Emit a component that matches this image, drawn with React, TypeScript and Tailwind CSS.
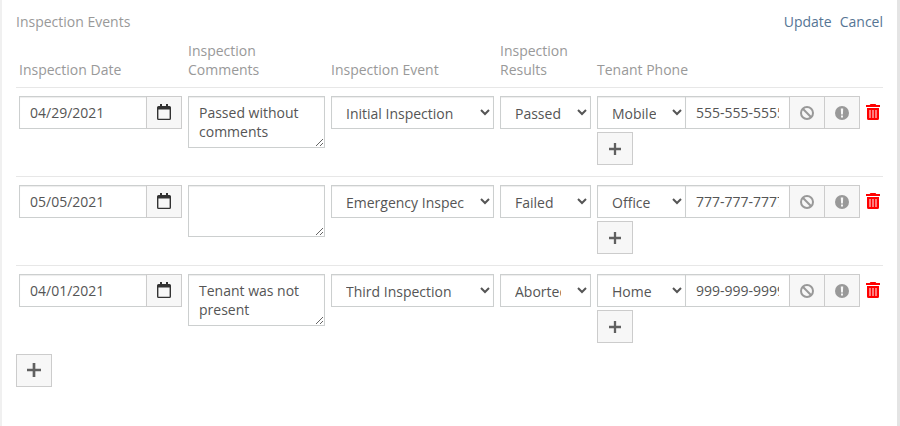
import { useState } from "react";

type InspectionRow = {
  id: number;
  date: string;
  comments: string;
  event: string;
  result: string;
  phoneType: string;
  phone: string;
};

const EVENTS = ["Initial Inspection", "Emergency Inspection", "Third Inspection"];
const RESULTS = ["Passed", "Failed", "Aborted"];
const PHONE_TYPES = ["Mobile", "Office", "Home"];
const COLUMNS = [
  "Inspection Date",
  "Inspection Comments",
  "Inspection Event",
  "Inspection Results",
  "Tenant Phone",
];

const initialRows: InspectionRow[] = [
  {
    id: 1,
    date: "04/29/2021",
    comments: "Passed without comments",
    event: "Initial Inspection",
    result: "Passed",
    phoneType: "Mobile",
    phone: "555-555-5555",
  },
  {
    id: 2,
    date: "05/05/2021",
    comments: "",
    event: "Emergency Inspection",
    result: "Failed",
    phoneType: "Office",
    phone: "777-777-7777",
  },
  {
    id: 3,
    date: "04/01/2021",
    comments: "Tenant was not present",
    event: "Third Inspection",
    result: "Aborted",
    phoneType: "Home",
    phone: "999-999-9999",
  },
];

const field =
  "block min-w-0 border border-[#cccfcf] bg-white text-[#555] shadow-[inset_0_1px_1px_rgba(0,0,0,0.075)] outline-none";
const iconButton =
  "flex h-[33px] w-9 shrink-0 items-center justify-center border border-[#ccc] bg-[#f7f7f7]";

function CalendarIcon() {
  return (
    <svg width="14" height="16" viewBox="0 0 14 16" aria-hidden="true">
      <path
        fill="#333"
        fillRule="evenodd"
        d="M3 0h2v2h4V0h2v2h1.5A1.5 1.5 0 0 1 14 3.500v11a1.500 1.500 0 0 1-1.500 1.500h-11A1.500 1.500 0 0 1 0 14.500v-11A1.500 1.500 0 0 1 1.500 2H3zM1.400 5.400v9.300h11.200V5.400z"
      />
    </svg>
  );
}

function BanIcon() {
  return (
    <svg width="14" height="14" viewBox="0 0 14 14" fill="none" stroke="#999" strokeWidth="2" aria-hidden="true">
      <circle cx="7" cy="7" r="6" />
      <path d="M2.800 2.800l8.400 8.400" />
    </svg>
  );
}

function AlertIcon() {
  return (
    <svg width="14" height="14" viewBox="0 0 14 14" aria-hidden="true">
      <circle cx="7" cy="7" r="7" fill="#999" />
      <path fill="#f7f7f7" d="M5.800 2.500h2.400L7.900 8.500H6.100zM6 9.500h2v2H6z" />
    </svg>
  );
}

function TrashIcon() {
  return (
    <svg width="14" height="16" viewBox="0 0 14 16" aria-hidden="true">
      <path fill="#f00" d="M4.500 0h5l.8 1H14v2H0V1h3.700zM1 4h12v10.500a1.500 1.500 0 0 1-1.500 1.500h-9A1.500 1.500 0 0 1 1 14.500z" />
      <path stroke="#fcc" strokeWidth="1.200" d="M4 6v8M7 6v8M10 6v8" />
    </svg>
  );
}

function PlusIcon({ size }: { size: number }) {
  return (
    <svg width={size} height={size} viewBox="0 0 12 12" stroke="#606060" strokeWidth="2.300" aria-hidden="true">
      <path d="M6 0v12M0 6h12" />
    </svg>
  );
}

function Select({
  label,
  value,
  options,
  onChange,
  className,
}: {
  label: string;
  value: string;
  options: string[];
  onChange: (v: string) => void;
  className: string;
}) {
  return (
    <select
      aria-label={label}
      value={value}
      onChange={(e) => onChange(e.target.value)}
      className={`${field} h-[33px] pt-0.5 pr-[13px] pl-2.5 ${className}`}
    >
      {options.map((o) => (
        <option key={o}>{o}</option>
      ))}
    </select>
  );
}

export default function App() {
  const [rows, setRows] = useState(initialRows);

  function update(id: number, patch: Partial<InspectionRow>) {
    setRows((all) => all.map((r) => (r.id === id ? { ...r, ...patch } : r)));
  }

  function addRow() {
    setRows((all) => [
      ...all,
      {
        id: Date.now(),
        date: "",
        comments: "",
        event: EVENTS[0],
        result: RESULTS[0],
        phoneType: PHONE_TYPES[0],
        phone: "",
      },
    ]);
  }

  return (
    <main className="min-h-screen border-l-2 border-r-3 border-l-[#f0f0f0] border-r-[#e4e4e4] bg-white pt-3 pr-3.5 pl-3.5 font-['Open_Sans',sans-serif] text-[14px] leading-[19px] text-[#999]">
      <header className="flex justify-between">
        <h2>Inspection Events</h2>
        <nav className="flex gap-2 text-[#567594]">
          <a href="#update">Update</a>
          <a href="#cancel">Cancel</a>
        </nav>
      </header>

      <table className="mt-2.5 w-full table-fixed border-collapse">
        <colgroup>
          <col className="w-[169px]" />
          <col className="w-[143px]" />
          <col className="w-[169px]" />
          <col className="w-[97px]" />
          <col className="w-[269px]" />
          <col className="w-[20px]" />
        </colgroup>
        <thead>
          <tr>
            {COLUMNS.map((c) => (
              <th key={c} scope="col" className="px-[3px] pb-2 text-left align-bottom font-normal">
                {c}
              </th>
            ))}
            <td />
          </tr>
        </thead>
        <tbody>
          {rows.map((row) => (
            <tr key={row.id} className="border-t border-[#e7e7e7] align-top">
              <td className="px-[3px] pt-2 pb-[11px]">
                <div className="flex">
                  <input
                    aria-label="Inspection Date"
                    value={row.date}
                    onChange={(e) => update(row.id, { date: e.target.value })}
                    className={`${field} h-[33px] flex-1 px-2.5`}
                  />
                  <button type="button" aria-label="Open calendar" className={`${iconButton} -ml-px pb-px`}>
                    <CalendarIcon />
                  </button>
                </div>
              </td>
              <td className="px-[3px] pt-2">
                <textarea
                  aria-label="Inspection Comments"
                  rows={2}
                  value={row.comments}
                  onChange={(e) => update(row.id, { comments: e.target.value })}
                  className={`${field} h-[52px] w-full overflow-hidden px-2.5 py-1.5`}
                />
              </td>
              <td className="px-[3px] pt-2">
                <Select
                  label="Inspection Event"
                  value={row.event}
                  options={EVENTS}
                  onChange={(event) => update(row.id, { event })}
                  className="w-full"
                />
              </td>
              <td className="px-[3px] pt-2">
                <Select
                  label="Inspection Results"
                  value={row.result}
                  options={RESULTS}
                  onChange={(result) => update(row.id, { result })}
                  className="w-full"
                />
              </td>
              <td className="px-[3px] pt-2 pb-[11px]">
                <div className="flex">
                  <Select
                    label="Phone type"
                    value={row.phoneType}
                    options={PHONE_TYPES}
                    onChange={(phoneType) => update(row.id, { phoneType })}
                    className="w-[89px]"
                  />
                  <input
                    type="tel"
                    aria-label="Phone number"
                    value={row.phone}
                    onChange={(e) => update(row.id, { phone: e.target.value })}
                    className={`${field} -ml-px h-[33px] flex-1 px-2.5`}
                  />
                  <button type="button" aria-label="Block number" className={`${iconButton} -ml-px pt-px`}>
                    <BanIcon />
                  </button>
                  <button type="button" aria-label="Mark as primary" className={`${iconButton} -ml-px pt-px`}>
                    <AlertIcon />
                  </button>
                </div>
                <button type="button" aria-label="Add phone" className={`${iconButton} mt-[3px] pt-px`}>
                  <PlusIcon size={12} />
                </button>
              </td>
              <td className="pt-2 pl-[3px]">
                <button
                  type="button"
                  aria-label="Delete row"
                  onClick={() => setRows((all) => all.filter((r) => r.id !== row.id))}
                  className="flex h-8 items-center"
                >
                  <TrashIcon />
                </button>
              </td>
            </tr>
          ))}
        </tbody>
      </table>

      <button type="button" aria-label="Add inspection" onClick={addRow} className={`${iconButton} pb-px`}>
        <PlusIcon size={14} />
      </button>
    </main>
  );
}
